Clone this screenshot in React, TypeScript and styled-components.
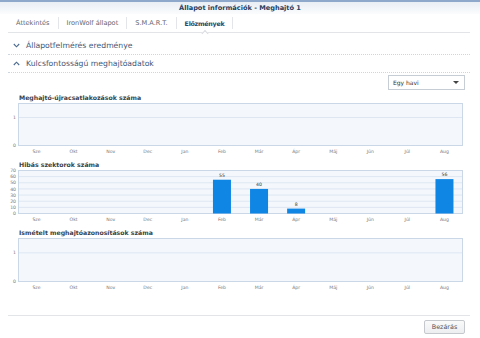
import React from "react";
import styled, { createGlobalStyle } from "styled-components";

const Global = createGlobalStyle`
  html, body { margin: 0; padding: 0; background: #fff; }
  body { font-family: "DejaVu Sans", Verdana, sans-serif; }
  * { box-sizing: border-box; }
`;

const Window = styled.div`
  width: 480px;
  height: 338px;
  background: #fff;
  border-top: 2px solid #8ea8cb;
  display: flex;
  flex-direction: column;
  overflow: hidden;
`;

const TitleBar = styled.div`
  height: 12px;
  display: flex;
  align-items: center;
  justify-content: center;
  background: linear-gradient(#e9eef5, #fbfcfd);
  font-size: 6.6px;
  font-weight: bold;
  color: #253e60;
`;

const TabRow = styled.div`
  margin: 0 10px 0 8px;
  height: 19px;
  display: flex;
  align-items: center;
  border-bottom: 1px solid #e2e4e7;
`;

const Tab = styled.div<{ $active?: boolean }>`
  position: relative;
  height: 12px;
  display: flex;
  align-items: center;
  padding: 0 8px;
  border-right: 1px solid #e3e5e8;
  font-size: ${(p) => (p.$active ? "6.3px" : "6.6px")};
  letter-spacing: ${(p) => (p.$active ? "-0.25px" : "0")};
  color: ${(p) => (p.$active ? "#2a4566" : "#5e6670")};
  font-weight: ${(p) => (p.$active ? "bold" : "normal")};
  ${(p) =>
    p.$active
      ? `&::after {
    content: "";
    position: absolute;
    left: 50%;
    bottom: -7px;
    width: 4px;
    height: 4px;
    background: #fff;
    border-left: 1px solid #d8dbe0;
    border-top: 1px solid #d8dbe0;
    transform: translateX(-50%) rotate(45deg);
  }`
      : ""}
`;

const Body = styled.div`
  padding: 4px 10px 0 8px;
  display: flex;
  flex-direction: column;
`;

const Section = styled.div`
  height: 18px;
  display: flex;
  align-items: center;
  gap: 6px;
  padding-left: 5px;
  border-bottom: 1px dotted #cfd5dc;
  font-size: 7.7px;
  color: #3f5776;
`;

const Chevron = ({ up }: { up?: boolean }) => (
  <svg width="7" height="5" viewBox="0 0 7 5">
    <polyline
      points={up ? "0.8,4 3.5,1.2 6.2,4" : "0.8,1 3.5,3.8 6.2,1"}
      fill="none"
      stroke="#4b6a90"
      strokeWidth="1.1"
    />
  </svg>
);

const Toolbar = styled.div`
  display: flex;
  justify-content: flex-end;
  padding: 2px 5px 0 0;
`;

const Select = styled.div`
  width: 77px;
  height: 15px;
  border: 1px solid #c6cdd5;
  background: #fff;
  display: flex;
  align-items: center;
  justify-content: space-between;
  padding: 0 5px 0 4px;
  font-size: 6px;
  color: #333;
`;

const Caret = styled.span`
  width: 0;
  height: 0;
  border-left: 3px solid transparent;
  border-right: 3px solid transparent;
  border-top: 3px solid #444;
`;

const ChartBlock = styled.div<{ $top: number }>`
  margin-top: ${(p) => p.$top}px;
  display: flex;
  flex-direction: column;
`;

const ChartTitle = styled.div`
  height: 8px;
  line-height: 8px;
  padding-left: 11px;
  font-size: 6.2px;
  font-weight: bold;
  color: #3a3f47;
  margin-bottom: -2px;
`;

const Footer = styled.div`
  margin: auto 10px 0 8px;
  border-top: 1px solid #e2e4e7;
  height: 23px;
  display: flex;
  justify-content: flex-end;
  align-items: flex-start;
  padding: 4px 5px 0 0;
`;

const Button = styled.button`
  width: 41px;
  height: 14px;
  border: 1px solid #c5c9ce;
  border-radius: 2px;
  background: linear-gradient(#fafafa, #eceef0);
  font-family: "DejaVu Sans", Verdana, sans-serif;
  font-size: 6.4px;
  color: #4b5563;
  padding: 0;
`;

const months = ["Sze", "Okt", "Nov", "Dec", "Jan", "Feb", "Már", "Ápr", "Máj", "Jún", "Júl", "Aug"];

type ChartProps = {
  boxH: number;
  max: number;
  ticks: number[];
  data?: Record<number, number>;
};

const BOX_X = 10;
const BOX_W = 445;
const PAD_TOP = 3;

const Chart = ({ boxH, max, ticks, data = {} }: ChartProps) => {
  const top = PAD_TOP + 0.5;
  const bottom = top + boxH;
  const yOf = (v: number) => bottom - (v / max) * boxH;
  const slot = BOX_W / 12;
  return (
    <svg width="460" height={boxH + 9 + PAD_TOP} style={{ display: "block" }}>
      <rect x={BOX_X + 0.5} y={top} width={BOX_W - 1} height={boxH} fill="#f4f8fd" stroke="#cad7e7" />
      {ticks.map((t) =>
        t > 0 && t < max ? (
          <line key={"g" + t} x1={BOX_X + 1} x2={BOX_X + BOX_W - 1} y1={yOf(t)} y2={yOf(t)} stroke="#dde6f1" strokeWidth="1" />
        ) : null
      )}
      {ticks.map((t) => (
        <text key={"t" + t} x={8} y={yOf(t) + 1.6} textAnchor="end" fontSize="4.6" fill="#777" fontFamily="DejaVu Sans">
          {t}
        </text>
      ))}
      {months.map((m, i) => {
        const cx = BOX_X + slot * (i + 0.5);
        const v = data[i];
        return (
          <g key={m}>
            {v !== undefined && (
              <>
                <rect x={cx - 9} y={yOf(v)} width={18} height={bottom - yOf(v)} fill="#0f86e4" />
                <text x={cx} y={yOf(v) - 3} textAnchor="middle" fontSize="4.6" fill="#333" fontFamily="DejaVu Sans">
                  {v}
                </text>
              </>
            )}
            <text x={cx} y={bottom + 7} textAnchor="middle" fontSize="4.6" fill="#777" fontFamily="DejaVu Sans">
              {m}
            </text>
          </g>
        );
      })}
    </svg>
  );
};

export default function App() {
  return (
    <>
      <Global />
      <Window>
        <TitleBar>Állapot információk - Meghajtó 1</TitleBar>
        <TabRow>
          <Tab>Áttekintés</Tab>
          <Tab>IronWolf állapot</Tab>
          <Tab>S.M.A.R.T.</Tab>
          <Tab $active>Előzmények</Tab>
        </TabRow>
        <Body>
          <Section>
            <Chevron />
            Állapotfelmérés eredménye
          </Section>
          <Section>
            <Chevron up />
            Kulcsfontosságú meghajtóadatok
          </Section>
          <Toolbar>
            <Select>
              Egy havi
              <Caret />
            </Select>
          </Toolbar>
          <ChartBlock $top={4}>
            <ChartTitle>Meghajtó-újracsatlakozások száma</ChartTitle>
            <Chart boxH={42} max={1.5} ticks={[0, 1]} />
          </ChartBlock>
          <ChartBlock $top={7}>
            <ChartTitle>Hibás szektorok száma</ChartTitle>
            <Chart boxH={43} max={70} ticks={[0, 10, 20, 30, 40, 50, 60, 70]} data={{ 5: 55, 6: 40, 7: 8, 11: 56 }} />
          </ChartBlock>
          <ChartBlock $top={7}>
            <ChartTitle>Ismételt meghajtóazonosítások száma</ChartTitle>
            <Chart boxH={43} max={1.5} ticks={[0, 1]} />
          </ChartBlock>
        </Body>
        <Footer>
          <Button>Bezárás</Button>
        </Footer>
      </Window>
    </>
  );
}
